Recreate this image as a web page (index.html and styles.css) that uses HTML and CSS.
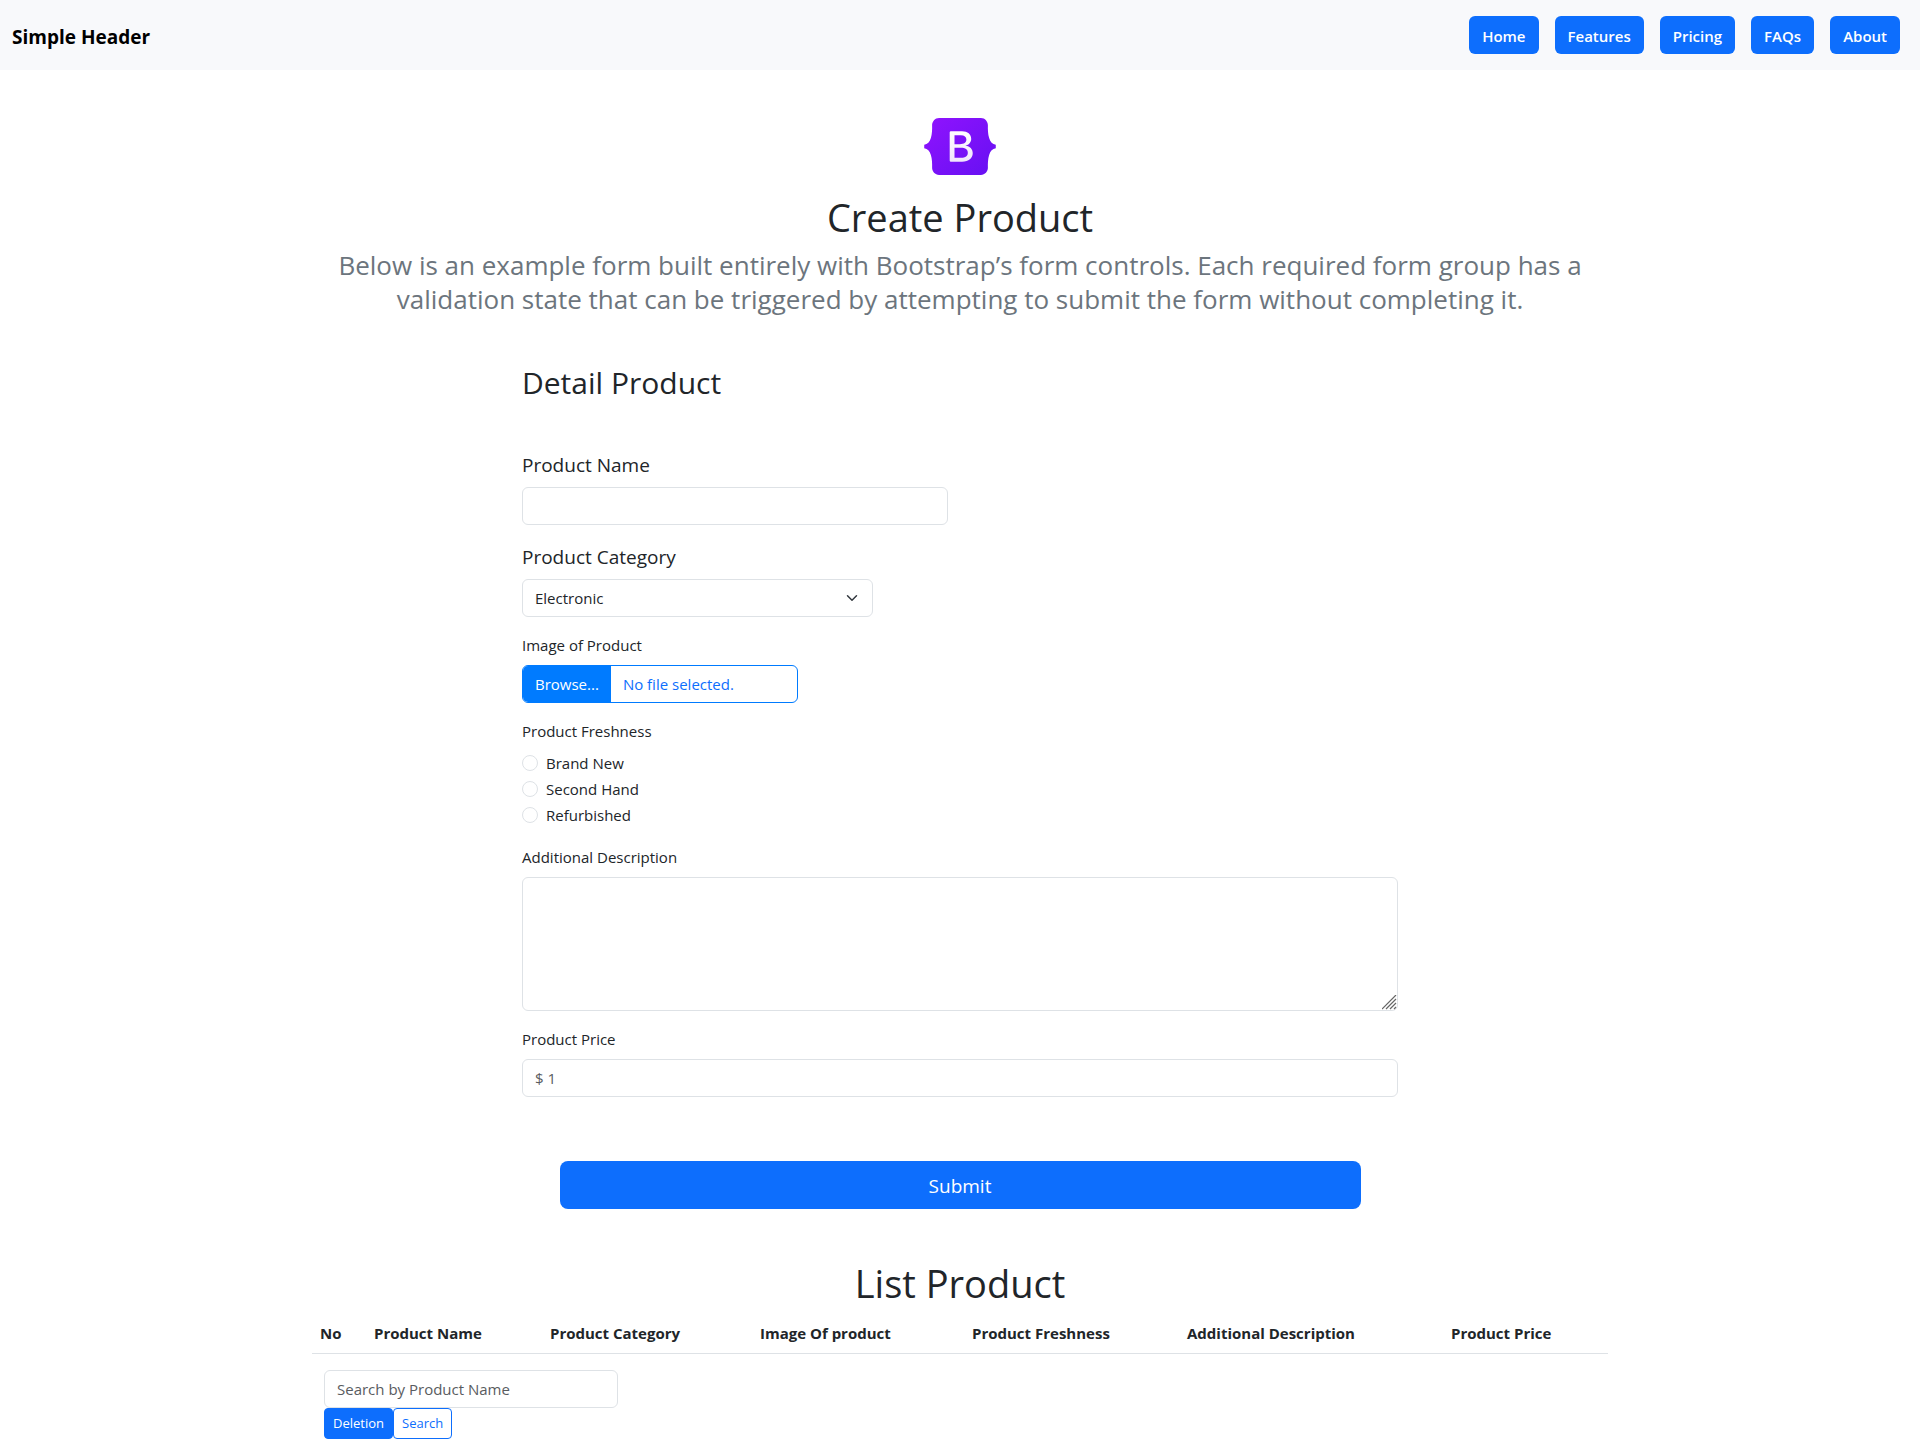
FILE: index.html
```html
<!DOCTYPE html>
<html lang="en">
<head>
<meta charset="utf-8">
<meta name="viewport" content="width=device-width, initial-scale=1">
<title>Create Product</title>
<link rel="stylesheet" href="styles.css">
</head>
<body>
<header class="site-header">
  <a class="brand" href="#">Simple Header</a>
  <nav class="site-nav">
    <a class="nav-link" href="#">Home</a>
    <a class="nav-link" href="#">Features</a>
    <a class="nav-link" href="#">Pricing</a>
    <a class="nav-link" href="#">FAQs</a>
    <a class="nav-link" href="#">About</a>
  </nav>
</header>

<main class="container">
  <section class="intro">
    <svg class="logo" viewBox="0 0 118 94" role="img" aria-label="Bootstrap">
      <defs>
        <linearGradient id="logo-body" x1="0" y1="0" x2="1" y2="1">
          <stop offset="0" stop-color="#9013fe"/>
          <stop offset="1" stop-color="#6610f2"/>
        </linearGradient>
        <linearGradient id="logo-mark" x1="0" y1="0" x2="0" y2="1">
          <stop offset="0" stop-color="#ffffff"/>
          <stop offset="1" stop-color="#f1e5fc"/>
        </linearGradient>
      </defs>
      <path fill="url(#logo-body)" d="M24.509 0c-6.733 0-11.715 5.893-11.492 12.284.214 6.14-.064 14.092-2.066 20.577C8.943 39.365 5.547 43.485 0 44.014v5.972c5.547.529 8.943 4.649 10.951 11.153 2.002 6.485 2.28 14.437 2.066 20.577C12.794 88.106 17.776 94 24.51 94H93.5c6.733 0 11.714-5.893 11.491-12.284-.214-6.14.064-14.092 2.066-20.577 2.009-6.504 5.396-10.624 10.943-11.153v-5.972c-5.547-.529-8.934-4.649-10.943-11.153-2.002-6.484-2.28-14.437-2.066-20.577C105.214 5.894 100.233 0 93.5 0H24.508z"/>
      <path fill="url(#logo-mark)" fill-rule="evenodd" d="M80 57.863C80 66.663 73.436 72 62.543 72H44a2 2 0 01-2-2V24a2 2 0 012-2h18.437c9.083 0 15.044 4.92 15.044 12.474 0 5.302-4.01 10.049-9.119 10.88v.277C75.317 46.394 80 51.21 80 57.863zM60.521 28.34H49.948v14.934h8.905c6.884 0 10.68-2.772 10.68-7.727 0-4.643-3.264-7.207-9.012-7.207zM49.948 49.2v16.458H60.91c7.167 0 10.964-2.876 10.964-8.281 0-5.406-3.903-8.178-11.425-8.178H49.948z"/>
    </svg>
    <h1 class="title">Create Product</h1>
    <p class="lead">Below is an example form built entirely with Bootstrap’s form controls. Each required form group has a validation state that can be triggered by attempting to submit the form without completing it.</p>
  </section>

  <form class="product-form">
    <h2 class="subtitle">Detail Product</h2>

    <div class="field span-6">
      <label class="label label-lg" for="name">Product Name</label>
      <input class="control" id="name" type="text">
    </div>

    <div class="field span-5">
      <label class="label label-lg" for="category">Product Category</label>
      <select class="control select" id="category">
        <option>Electronic</option>
        <option>Furniture</option>
        <option>Clothing</option>
      </select>
    </div>

    <div class="field span-4">
      <label class="label" for="image">Image of Product</label>
      <label class="file">
        <input class="file-input" id="image" type="file">
        <span class="file-button">Browse...</span>
        <span class="file-name">No file selected.</span>
      </label>
    </div>

    <fieldset class="field freshness">
      <legend class="label">Product Freshness</legend>
      <label class="option"><input class="radio" type="radio" name="freshness">Brand New</label>
      <label class="option"><input class="radio" type="radio" name="freshness">Second Hand</label>
      <label class="option"><input class="radio" type="radio" name="freshness">Refurbished</label>
    </fieldset>

    <div class="field">
      <label class="label" for="description">Additional Description</label>
      <textarea class="control textarea" id="description" rows="5"></textarea>
    </div>

    <div class="field">
      <label class="label" for="price">Product Price</label>
      <input class="control" id="price" type="text" placeholder="$ 1">
    </div>

    <button class="submit" type="submit">Submit</button>
  </form>

  <section class="list">
    <h1 class="title">List Product</h1>
    <table class="products">
      <colgroup>
        <col class="col-no"><col class="col-name"><col class="col-category"><col class="col-image"><col class="col-freshness"><col class="col-description"><col class="col-price">
      </colgroup>
      <thead>
        <tr>
          <th scope="col">No</th>
          <th scope="col">Product Name</th>
          <th scope="col">Product Category</th>
          <th scope="col">Image Of product</th>
          <th scope="col">Product Freshness</th>
          <th scope="col">Additional Description</th>
          <th scope="col">Product Price</th>
        </tr>
      </thead>
    </table>
    <div class="search">
      <input class="control" type="search" placeholder="Search by Product Name" aria-label="Search by Product Name">
      <div class="actions">
        <button class="btn-sm btn-solid" type="button">Deletion</button>
        <button class="btn-sm btn-outline" type="button">Search</button>
      </div>
    </div>
  </section>
</main>
</body>
</html>
```
FILE: styles.css
```css
*,
*::before,
*::after {
  box-sizing: border-box;
}

body {
  margin: 0;
  background: #fff;
  color: #212529;
  font-family: "Segoe UI", "Open Sans", "Noto Sans", sans-serif;
  font-size: 15px;
  line-height: 24px;
}

input,
select,
textarea,
button {
  margin: 0;
  color: inherit;
  font: inherit;
}

.site-header {
  display: flex;
  align-items: center;
  justify-content: space-between;
  padding: 16px 20px 16px 12px;
  background: #f8f9fb;
}

.brand {
  padding-top: 4px;
  color: #000;
  font-size: 19px;
  font-weight: 700;
  line-height: 30px;
  text-decoration: none;
}

.site-nav {
  display: flex;
  gap: 16px;
}

.nav-link {
  padding: 8px 13px 6px;
  border-radius: 6px;
  background: #0d6efd;
  color: #fff;
  font-weight: 600;
  text-decoration: none;
}

.container {
  max-width: 1320px;
  margin: 0 auto;
  padding: 0 12px;
}

.intro {
  padding: 48px 0;
  text-align: center;
}

.logo {
  display: block;
  width: 72px;
  height: 57px;
  margin: 0 auto 16px;
}

.title {
  margin: 0 0 6px;
  padding-top: 2px;
  font-size: 38px;
  font-weight: 400;
  line-height: 48px;
  text-align: center;
}

.lead {
  margin: 0;
  padding-top: 1px;
  color: #6c757d;
  font-size: 26px;
  line-height: 34px;
}

.product-form {
  display: grid;
  grid-template-columns: repeat(12, 1fr);
  gap: 16px 24px;
  max-width: 876px;
  margin: 0 auto;
}

.subtitle {
  grid-column: 1 / -1;
  margin: 0 0 31px;
  font-size: 30px;
  font-weight: 400;
  line-height: 38px;
}

.field {
  grid-column: 1 / -1;
  min-width: 0;
  margin: 0;
  padding: 0;
  border: 0;
}

.span-6 {
  grid-column: 1 / span 6;
}

.span-5 {
  grid-column: 1 / span 5;
}

.span-4 {
  grid-column: 1 / span 4;
}

.label {
  display: block;
  margin-bottom: 8px;
  padding: 0;
}

.label-lg {
  margin-bottom: 6px;
  font-size: 19px;
  line-height: 32px;
}

.control {
  display: block;
  width: 100%;
  padding: 6px 12px;
  border: 1px solid #dee2e6;
  border-radius: 6px;
  background-color: #fff;
  appearance: none;
}

.control::placeholder {
  color: #595c5f;
  opacity: 1;
}

.select {
  background-image: url("data:image/svg+xml,%3csvg xmlns='http://www.w3.org/2000/svg' viewBox='0 0 16 16'%3e%3cpath fill='none' stroke='%23343a40' stroke-linecap='round' stroke-linejoin='round' stroke-width='2' d='m2 5 6 6 6-6'/%3e%3c/svg%3e");
  background-repeat: no-repeat;
  background-position: right 12px center;
  background-size: 16px 12px;
}

.textarea {
  resize: vertical;
}

.textarea::-webkit-resizer {
  background: url("data:image/svg+xml,%3csvg xmlns='http://www.w3.org/2000/svg' viewBox='0 0 15 15'%3e%3cpath fill='none' stroke='%23666' stroke-width='1.2' d='M0 14 14 0M4 14 14 4M8 14l6-6M12 14l2-2'/%3e%3c/svg%3e") no-repeat center / 15px 15px;
}

.file {
  position: relative;
  display: flex;
  overflow: hidden;
  border: 1px solid #007bff;
  border-radius: 6px;
  color: #0d6efd;
}

.file-input {
  position: absolute;
  inset: 0;
  width: 100%;
  opacity: 0;
}

.file-button {
  padding: 6px 12px;
  background: #007bff;
  color: #fff;
}

.file-name {
  padding: 6px 12px;
}

.option {
  display: flex;
  gap: 8px;
  margin-bottom: 2px;
}

.radio {
  width: 16px;
  height: 16px;
  margin: 4px 0;
  border: 1px solid #dee2e6;
  border-radius: 50%;
  appearance: none;
}

.radio:checked {
  border: 5px solid #0d6efd;
}

.submit {
  grid-column: 1 / -1;
  justify-self: center;
  width: 100%;
  max-width: 801px;
  margin: 48px 0;
  padding: 10px 16px 8px;
  border: 0;
  border-radius: 8px;
  background: #0d6efd;
  color: #fff;
  font-size: 19px;
  line-height: 30px;
}

.products {
  width: 100%;
  border-collapse: collapse;
  table-layout: fixed;
}

.products th {
  padding: 8px;
  border-bottom: 1px solid #dee2e6;
  text-align: left;
  font-weight: 700;
}

.col-no { width: 54px; }
.col-name { width: 176px; }
.col-category { width: 210px; }
.col-image { width: 212px; }
.col-freshness { width: 215px; }
.col-description { width: 264px; }
.col-price { width: 165px; }

.search {
  max-width: 318px;
  padding: 16px 12px 0;
}

.actions {
  display: flex;
}

.btn-sm {
  padding: 4px 8px;
  border: 1px solid #0d6efd;
  border-radius: 4px;
  font-size: 13px;
  line-height: 21px;
}

.btn-solid {
  background: #0d6efd;
  color: #fff;
}

.btn-outline {
  background: #fff;
  color: #0d6efd;
}
```
